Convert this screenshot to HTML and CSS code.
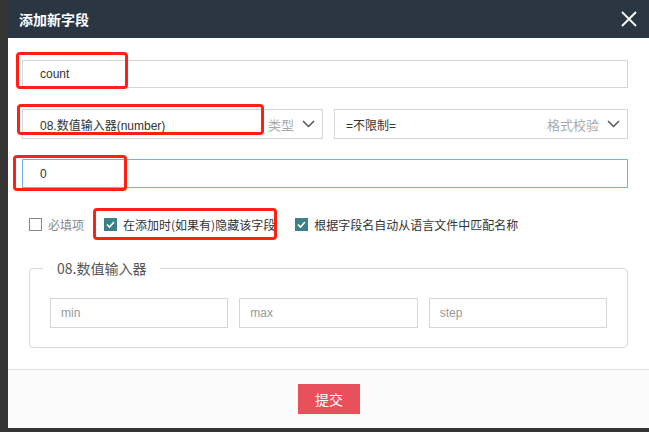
FILE: index.html
```html
<!DOCTYPE html>
<html lang="zh-CN">
<head>
    <meta charset="UTF-8">
    <meta name="viewport" content="width=device-width, initial-scale=1.0">
    <title>添加新字段</title>
    <link rel="stylesheet" href="styles.css">
</head>
<body>
    <div class="page">
        <div class="dialog">
            <div class="dialog-header">
                <span class="dialog-title">添加新字段</span>
                <svg class="close" width="16" height="16" viewBox="0 0 16 16">
                    <path d="M1 1 L15 15 M15 1 L1 15" stroke="#fff" stroke-width="1.8" fill="none"/>
                </svg>
            </div>

            <div class="dialog-body">
                <input class="field" type="text" value="count">

                <div class="select-row">
                    <div class="select select-type">
                        <span class="select-value">08.数值输入器(number)</span>
                        <span class="select-hint">类型</span>
                        <svg class="chevron" width="13" height="8" viewBox="0 0 13 8">
                            <path d="M1 1 L6.5 6.5 L12 1" stroke="#555" stroke-width="1.5" fill="none"/>
                        </svg>
                    </div>
                    <div class="select select-format">
                        <span class="select-value">=不限制=</span>
                        <span class="select-hint">格式校验</span>
                        <svg class="chevron" width="13" height="8" viewBox="0 0 13 8">
                            <path d="M1 1 L6.5 6.5 L12 1" stroke="#555" stroke-width="1.5" fill="none"/>
                        </svg>
                    </div>
                </div>

                <div class="field-wrap">
                    <input class="field-inner" type="text" value="0">
                </div>

                <div class="check-row">
                    <label class="check">
                        <span class="box"></span>
                        <span class="check-text muted">必填项</span>
                    </label>
                    <label class="check">
                        <span class="box checked">
                            <svg width="13" height="13" viewBox="0 0 13 13"><path d="M3 6.5 L5.5 9 L10 4" stroke="#fff" stroke-width="1.6" fill="none"/></svg>
                        </span>
                        <span class="check-text">在添加时(如果有)隐藏该字段</span>
                    </label>
                    <label class="check">
                        <span class="box checked">
                            <svg width="13" height="13" viewBox="0 0 13 13"><path d="M3 6.5 L5.5 9 L10 4" stroke="#fff" stroke-width="1.6" fill="none"/></svg>
                        </span>
                        <span class="check-text">根据字段名自动从语言文件中匹配名称</span>
                    </label>
                </div>

                <fieldset class="options">
                    <legend>08.数值输入器</legend>
                    <div class="options-grid">
                        <input class="small-field" type="text" placeholder="min">
                        <input class="small-field" type="text" placeholder="max">
                        <input class="small-field" type="text" placeholder="step">
                    </div>
                </fieldset>
            </div>

            <div class="dialog-footer">
                <button type="button" class="submit">提交</button>
            </div>
        </div>

        <!-- highlight frames -->
        <div class="mark mark-name"></div>
        <div class="mark mark-type"></div>
        <div class="mark mark-default"></div>
        <div class="mark mark-hide"></div>
    </div>
</body>
</html>
```

FILE: styles.css
```css
body {
    margin: 0;
    background-color: #353535;
    font-family: "Liberation Sans", "Noto Sans CJK SC", sans-serif;
    font-size: 12px;
    color: #333;
    overflow: hidden;
}
.page {
    position: relative;
    width: 649px;
    height: 432px;
}
.dialog {
    margin-left: 8px;
    width: 642px;
    height: 428px;
    background: #fff;
    display: flex;
    flex-direction: column;
}
.dialog-header {
    height: 38px;
    background-color: #2b3643;
    display: flex;
    align-items: center;
    justify-content: space-between;
    padding: 0 13px 0 11px;
    flex-shrink: 0;
}
.dialog-title {
    color: #fff;
    font-family: "Noto Sans CJK SC", sans-serif;
    font-weight: bold;
    font-size: 14px;
}
.dialog-body {
    flex: 1;
    padding: 22px 22px 0 14px;
}
.field {
    display: block;
    width: 100%;
    height: 28px;
    padding: 0 17px;
    border: 1px solid #d6d6d6;
    background: #fff;
    box-sizing: border-box;
    font-family: inherit;
    font-size: 12px;
    color: #333;
    outline: none;
    appearance: none;
}
/* focused field: the border sits on the wrapper */
.field-wrap {
    height: 29px;
    margin-top: 20px;
    border: 1px solid #75b0e6;
    box-sizing: border-box;
    background: #fff;
}
.field-inner {
    display: block;
    width: 100%;
    height: 100%;
    padding: 0 17px;
    border: none;
    box-sizing: border-box;
    font-family: inherit;
    font-size: 12px;
    color: #333;
    outline: none;
    background: transparent;
}
.select-row {
    display: flex;
    gap: 11px;
    margin-top: 21px;
}
.select {
    height: 30px;
    border: 1px solid #d6d6d6;
    box-sizing: border-box;
    display: flex;
    align-items: center;
    padding: 0 7px 0 17px;
}
.select-type {
    width: 301px;
}
.select-format {
    flex: 1;
    padding-left: 11px;
}
.select-value {
    flex: 1;
}
.select-hint {
    color: #aaa;
    font-family: "Noto Sans CJK SC", sans-serif;
    font-size: 13px;
    margin-right: 8px;
}
.chevron {
    display: block;
}
.check-row {
    display: flex;
    align-items: center;
    margin: 26px 0 0 7px;
    height: 20px;
}
.check {
    display: flex;
    align-items: center;
    margin-right: 20px;
}
.box {
    width: 13px;
    height: 13px;
    border: 1px solid #888;
    box-sizing: border-box;
    margin-right: 6px;
    display: flex;
}
.box.checked {
    border: none;
    background-color: #3c808a;
}
.check-text {
    font-family: "Noto Sans CJK SC", sans-serif;
    color: #333;
}
.check-text.muted {
    color: #888;
}
.options {
    margin: 24px 0 0 7px;
    padding: 20px 20px 19px 20px;
    border: 1px solid #d9d9d9;
    border-radius: 4px;
}
.options legend {
    margin-left: -7px;
    padding: 0 14px;
    font-family: "Noto Sans CJK SC", sans-serif;
    font-size: 14px;
    color: #555;
}
.options-grid {
    display: grid;
    grid-template-columns: repeat(3, 1fr);
    gap: 11px;
}
.small-field {
    height: 30px;
    padding: 0 10px;
    border: 1px solid #d6d6d6;
    background: #fff;
    box-sizing: border-box;
    font-family: inherit;
    font-size: 12px;
    min-width: 0;
    appearance: none;
}
.small-field::placeholder {
    color: #999;
}
.dialog-footer {
    height: 58px;
    border-top: 1px solid #ddd;
    background-color: #fbfbfb;
    display: flex;
    align-items: center;
    justify-content: center;
}
.submit {
    width: 62px;
    height: 30px;
    border: none;
    background-color: #e8505b;
    color: #fff;
    font-family: "Noto Sans CJK SC", sans-serif;
    font-size: 14px;
    cursor: pointer;
}
.mark {
    position: absolute;
    border: 3px solid #ff2214;
    border-radius: 4px;
    box-sizing: border-box;
}
.mark-name {
    left: 16px;
    top: 52px;
    width: 112px;
    height: 37px;
}
.mark-type {
    left: 17px;
    top: 104px;
    width: 247px;
    height: 31px;
}
.mark-default {
    left: 13px;
    top: 155px;
    width: 114px;
    height: 36px;
}
.mark-hide {
    left: 93px;
    top: 208px;
    width: 184px;
    height: 32px;
}
```
